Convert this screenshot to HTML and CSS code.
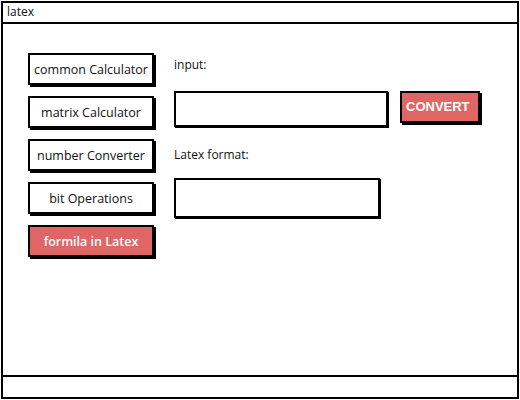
FILE: index.html
```html
<!DOCTYPE html>
<html lang="en">
<head>
    <meta charset="UTF-8">
    <meta name="viewport" content="width=device-width, initial-scale=1.0">
    <title>latex</title>
    <link rel="stylesheet" href="styles.css">
</head>
<body>
    <div class="window">
        <div class="titlebar">latex</div>
        <div class="content">
            <div class="nav">
                <button class="nav-btn">common Calculator</button>
                <button class="nav-btn">matrix Calculator</button>
                <button class="nav-btn">number Converter</button>
                <button class="nav-btn">bit Operations</button>
                <button class="nav-btn active">formila in Latex</button>
            </div>
            <div class="main">
                <label class="label">input:</label>
                <div class="input-row">
                    <input class="field" type="text">
                    <button class="convert">CONVERT</button>
                </div>
                <label class="label label-out">Latex format:</label>
                <div class="output"></div>
            </div>
        </div>
        <div class="statusbar"></div>
    </div>
</body>
</html>
```
FILE: styles.css
```css
body {
    margin: 0;
    background: #fff;
    font-family: 'Open Sans', 'Noto Sans', sans-serif;
    color: #111;
}
.window {
    margin: 1px;
    width: 514px;
    height: 394px;
    border: 2px solid #000;
    display: flex;
    flex-direction: column;
}
.titlebar {
    height: 19px;
    border-bottom: 2px solid #000;
    font-size: 12px;
    line-height: 17px;
    padding-left: 4px;
}
.content {
    flex: 1;
    display: flex;
    gap: 20px;
    padding: 29px 0 0 25px;
}
.nav {
    display: flex;
    flex-direction: column;
    gap: 11px;
}
.nav-btn {
    width: 126px;
    height: 32px;
    border: 2px solid #000;
    box-shadow: 2px 2px 0 #000;
    background: #fff;
    font-family: inherit;
    font-size: 12.5px;
    color: #111;
    padding: 0;
}
.nav-btn.active {
    background: #e06666;
    color: #fff;
    font-weight: 600;
}
.main {
    display: flex;
    flex-direction: column;
    align-items: flex-start;
}
.label {
    font-size: 12px;
    line-height: 24px;
}
.input-row {
    display: flex;
    gap: 12px;
    margin-top: 14px;
}
.field {
    width: 214px;
    height: 36px;
    box-sizing: border-box;
    border: 2px solid #000;
    box-shadow: 1px 1px 0 #000;
    outline: none;
}
.convert {
    width: 80px;
    height: 32px;
    border: 2px solid #000;
    box-shadow: 2px 2px 0 #000;
    background: #e06666;
    color: #fff;
    font-family: 'Liberation Sans', Arial, sans-serif;
    font-weight: bold;
    font-size: 13px;
    text-align: left;
    padding: 0 0 2px 4px;
}
.label-out {
    margin-top: 16px;
}
.output {
    width: 206px;
    height: 40px;
    box-sizing: border-box;
    border: 2px solid #000;
    box-shadow: 1px 1px 0 #000;
    margin-top: 11px;
}
.statusbar {
    height: 20px;
    border-top: 2px solid #000;
}
```
